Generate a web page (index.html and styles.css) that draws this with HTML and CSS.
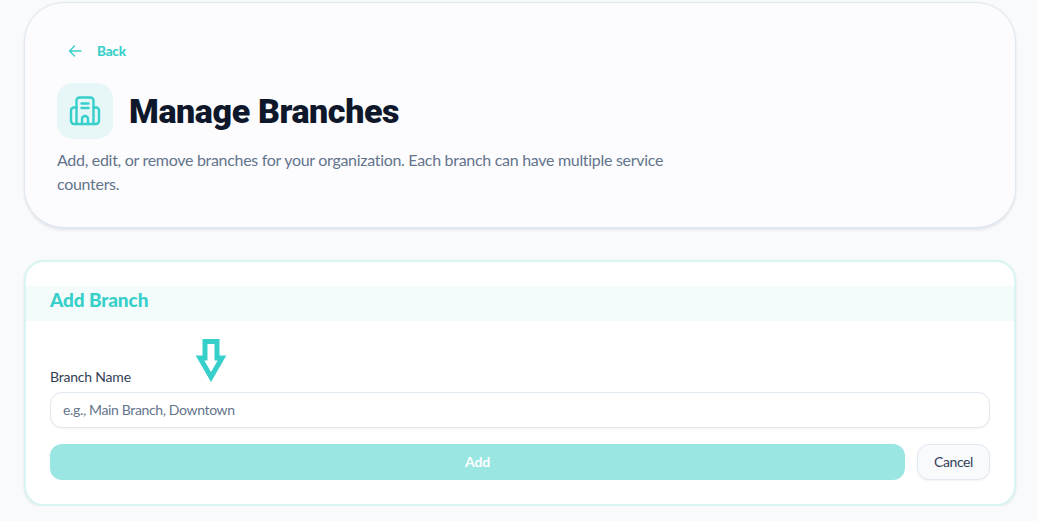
FILE: index.html
```html
<!DOCTYPE html>
<html lang="en">
<head>
  <meta charset="UTF-8" />
  <meta name="viewport" content="width=device-width, initial-scale=1.0"/>
  <title>Manage Branches</title>
  <link rel="stylesheet" href="styles.css">
</head>
<body>
  <!-- Page header -->
  <header class="page-header">
    <a class="back-link" href="#">
      <svg class="back-icon" width="14" height="14" viewBox="0 0 14 14" fill="none" stroke="currentColor" stroke-width="1.4" stroke-linecap="round" stroke-linejoin="round">
        <path d="M13 7H1.5M6.5 2 1.5 7l5 5"/>
      </svg>
      <span>Back</span>
    </a>
    <div class="title-row">
      <div class="title-icon">
        <svg width="32" height="32" viewBox="0 0 32 32" fill="none" stroke="currentColor" stroke-width="2.4" stroke-linecap="round" stroke-linejoin="round">
          <path d="M7.5 29V5.500a3 3 0 0 1 3-3h11a3 3 0 0 1 3 3V29"/>
          <path d="M7.500 12.500H5a3 3 0 0 0-3 3V26a3 3 0 0 0 3 3h22a3 3 0 0 0 3-3V15.500a3 3 0 0 0-3-3h-2.500"/>
          <path d="M12.500 8.500h7M12.500 13h7"/>
          <path d="M13 29v-5a3 3 0 0 1 6 0v5"/>
        </svg>
      </div>
      <h1>Manage Branches</h1>
    </div>
    <p class="subtitle">Add, edit, or remove branches for your organization. Each branch can have multiple service counters.</p>
  </header>

  <!-- Add branch form -->
  <section class="form-card">
    <h2>Add Branch</h2>
    <form class="form-body">
      <label for="branch-name">Branch Name</label>
      <input id="branch-name" type="text" placeholder="e.g., Main Branch, Downtown"/>
      <div class="form-actions">
        <button type="button" class="btn-add">Add</button>
        <button type="button" class="btn-cancel">Cancel</button>
      </div>
      <svg class="hint-arrow" width="34" height="46" viewBox="0 0 34 46" fill="#fff" stroke="currentColor" stroke-width="5" stroke-miterlimit="2.4">
        <path d="M11 4.500H23V21H28L17 40 6 21H11Z"/>
      </svg>
    </form>
  </section>
</body>
</html>
```

FILE: styles.css
```css
body {
  margin: 0;
  padding: 2px 21px 0 24px;
  background: #f8fafc;
  font-family: Lato, "Noto Sans", sans-serif;
  color: #334155;
  overflow: hidden;
}

/* Page header */
.page-header {
  background: #fcfcff;
  border: 1px solid #e2e8f0;
  border-bottom-width: 2px;
  border-radius: 40px;
  padding: 32px;
  height: 227px;
  box-sizing: border-box;
  box-shadow: 0 1px 3px rgba(15, 23, 42, 0.1);
}
.back-link {
  display: flex;
  align-items: center;
  gap: 16px;
  height: 32px;
  padding-left: 11px;
  margin-bottom: 16px;
  color: #3ad0ca;
  font-size: 13.500px;
  font-weight: 900;
  letter-spacing: -0.2px;
  line-height: 30px;
  text-decoration: none;
}
.back-link span {
  margin: 0 0 0 -1px;
}
.title-row {
  display: flex;
  align-items: center;
  gap: 16px;
}
.title-icon {
  width: 56px;
  height: 56px;
  border-radius: 16px;
  background: #e7f7f7;
  color: #36cfc9;
  display: flex;
  justify-content: center;
  align-items: center;
}
h1 {
  margin: 0;
  color: #0f172a;
  font-family: Roboto, sans-serif;
  font-size: 34px;
  font-weight: 900;
  letter-spacing: -0.4px;
}
.subtitle {
  margin: 9px 0 0;
  max-width: 640px;
  color: #64748b;
  font-size: 16px;
  letter-spacing: -0.3px;
  line-height: 24px;
}

/* Add branch card */
.form-card {
  margin-top: 31px;
  background: #fff;
  border: 2px solid #d9f5f3;
  border-radius: 20px;
  padding-top: 24px;
  height: 246px;
  box-sizing: border-box;
  box-shadow: 0 1px 3px rgba(15, 23, 42, 0.1);
}
.form-card h2 {
  margin: 0;
  height: 35px;
  padding-left: 24px;
  background: #f3fcfb;
  color: #36cfc9;
  font-size: 19px;
  font-weight: 900;
  letter-spacing: -0.1px;
  line-height: 28px;
}
.form-body {
  position: relative;
  display: flex;
  flex-direction: column;
  padding: 47px 24px 0;
}
.form-body label {
  font-size: 14px;
  letter-spacing: -0.2px;
  line-height: 17px;
  margin-bottom: 7px;
}
.form-body input {
  height: 36px;
  box-sizing: border-box;
  padding: 0 12px 2px;
  border: 1px solid #e2e8f0;
  border-radius: 12px;
  background: #fff;
  font: inherit;
  font-size: 14px;
  letter-spacing: -0.35px;
  box-shadow: 0 1px 2px rgba(15, 23, 42, 0.05);
}
.form-body input::placeholder {
  color: #64748b;
  opacity: 1;
}
.form-actions {
  display: flex;
  gap: 12px;
  margin-top: 16px;
}
.form-actions button {
  height: 36px;
  border-radius: 12px;
  padding: 0 0 2px;
  font: inherit;
  font-size: 14px;
  letter-spacing: -0.2px;
}
.btn-add {
  flex: 1;
  border: none;
  background: #9ae6e3;
  color: #fff;
  font-weight: 700 !important;
}
.btn-cancel {
  width: 73px;
  border: 1px solid #e2e8f0;
  background: #f8fafc;
  color: #334155;
  letter-spacing: -0.4px !important;
  box-shadow: 0 1px 2px rgba(15, 23, 42, 0.05);
}

/* Arrow drawn over the form */
.hint-arrow {
  position: absolute;
  left: 168px;
  top: 16px;
  color: #36cfc9;
}
```
